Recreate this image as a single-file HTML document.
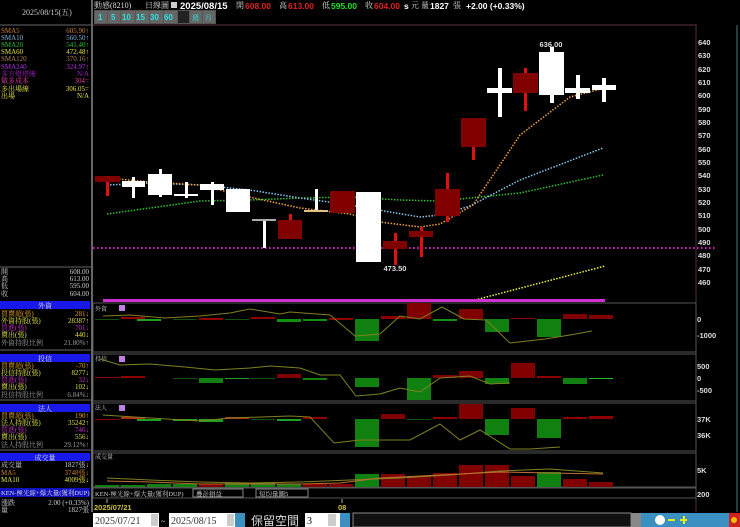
<!DOCTYPE html>
<html><head><meta charset="utf-8"><style>
html,body{margin:0;padding:0;background:#000;width:740px;height:527px;overflow:hidden}
svg{display:block;font-family:"Liberation Serif","Noto Serif CJK SC","Noto Sans CJK TC",serif}
.b{font-family:"Liberation Sans","Noto Sans CJK TC",sans-serif;font-weight:bold}
.s{font-family:"Noto Sans CJK TC","WenQuanYi Zen Hei",sans-serif}
</style></head><body>
<svg width="740" height="527" viewBox="0 0 740 527" xmlns="http://www.w3.org/2000/svg" font-size="7">
<rect width="740" height="527" fill="#000"/>
<line x1="92" y1="0" x2="92" y2="512" stroke="#888" stroke-width="1.5"/>
<line x1="0" y1="25" x2="92" y2="25" stroke="#666"/>
<text x="22" y="15" fill="#ccc" font-size="8">2025/08/15(五)</text>
<g font-size="7">
<text x="1" y="33" fill="#d08030">SMA5</text><text x="89" y="33" fill="#d08030" text-anchor="end">605.90↑</text>
<text x="1" y="40" fill="#80b8e0">SMA10</text><text x="89" y="40" fill="#80b8e0" text-anchor="end">560.50↑</text>
<text x="1" y="47" fill="#30c030">SMA20</text><text x="89" y="47" fill="#30c030" text-anchor="end">541.40↑</text>
<text x="1" y="54" fill="#e0e040">SMA60</text><text x="89" y="54" fill="#e0e040" text-anchor="end">472.48↑</text>
<text x="1" y="61" fill="#b08050">SMA120</text><text x="89" y="61" fill="#b08050" text-anchor="end">370.16↑</text>
<text x="1" y="69" fill="#b030e0">SMA240</text><text x="89" y="69" fill="#b030e0" text-anchor="end">324.97↑</text>
<text x="1" y="76" fill="#a020c0">多方燈塔線</text><text x="89" y="76" fill="#a020c0" text-anchor="end">N/A</text>
<text x="1" y="83" fill="#e040a0">做多成本</text><text x="89" y="83" fill="#e040a0" text-anchor="end">304=</text>
<text x="1" y="91" fill="#e0e040">多出場線</text><text x="89" y="91" fill="#e0e040" text-anchor="end">306.05=</text>
<text x="1" y="98" fill="#e0e040">出場</text><text x="89" y="98" fill="#e0e040" text-anchor="end">N/A</text>
</g>
<line x1="0" y1="267" x2="92" y2="267" stroke="#666"/>
<g font-size="7" fill="#ccc">
<text x="1" y="274">開</text><text x="89" y="274" text-anchor="end">608.00</text>
<text x="1" y="281">高</text><text x="89" y="281" text-anchor="end">613.00</text>
<text x="1" y="288">低</text><text x="89" y="288" text-anchor="end">595.00</text>
<text x="1" y="296">收</text><text x="89" y="296" text-anchor="end">604.00</text>
</g>
<g>
<rect x="0" y="301" width="90" height="8" fill="#1818e8"/><text x="45" y="308" fill="#ddd" text-anchor="middle">外資</text>
<rect x="0" y="354" width="90" height="8" fill="#1818e8"/><text x="45" y="361" fill="#ddd" text-anchor="middle">投信</text>
<rect x="0" y="404" width="90" height="8" fill="#1818e8"/><text x="45" y="411" fill="#ddd" text-anchor="middle">法人</text>
<rect x="0" y="453" width="90" height="8" fill="#1818e8"/><text x="45" y="460" fill="#ddd" text-anchor="middle">成交量</text>
<rect x="0" y="488" width="90" height="9" fill="#1010c0"/><text x="1" y="495" fill="#ddd" font-size="6.5">KEN-極光線+爆大量(獲利DUP)</text>
</g>
<line x1="0" y1="350" x2="92" y2="350" stroke="#666"/><line x1="0" y1="400" x2="92" y2="400" stroke="#666"/><line x1="0" y1="450" x2="92" y2="450" stroke="#666"/>
<g font-size="7">
<text x="1" y="316" fill="#e0a020">買賣超(張)</text><text x="89" y="316" fill="#e0a020" text-anchor="end">281↓</text>
<text x="1" y="323" fill="#e0e040">外資持股(張)</text><text x="89" y="323" fill="#e0e040" text-anchor="end">28387↑</text>
<text x="1" y="330" fill="#c030c0">買進(張)</text><text x="89" y="330" fill="#c030c0" text-anchor="end">701↓</text>
<text x="1" y="337" fill="#e0e040">賣出(張)</text><text x="89" y="337" fill="#e0e040" text-anchor="end">440↓</text>
<text x="1" y="345" fill="#999">外資持股比例</text><text x="89" y="345" fill="#999" text-anchor="end">21.80%↑</text>
<text x="1" y="368" fill="#e0a020">買賣超(張)</text><text x="89" y="368" fill="#e0a020" text-anchor="end">-70↑</text>
<text x="1" y="375" fill="#e0e040">投信持股(張)</text><text x="89" y="375" fill="#e0e040" text-anchor="end">8277↓</text>
<text x="1" y="382" fill="#c030c0">買進(張)</text><text x="89" y="382" fill="#c030c0" text-anchor="end">32↓</text>
<text x="1" y="389" fill="#e0e040">賣出(張)</text><text x="89" y="389" fill="#e0e040" text-anchor="end">102↓</text>
<text x="1" y="397" fill="#999">投信持股比例</text><text x="89" y="397" fill="#999" text-anchor="end">6.84%↓</text>
<text x="1" y="418" fill="#e0a020">買賣超(張)</text><text x="89" y="418" fill="#e0a020" text-anchor="end">190↑</text>
<text x="1" y="425" fill="#e0e040">法人持股(張)</text><text x="89" y="425" fill="#e0e040" text-anchor="end">35242↑</text>
<text x="1" y="432" fill="#c030c0">買進(張)</text><text x="89" y="432" fill="#c030c0" text-anchor="end">746↓</text>
<text x="1" y="439" fill="#e0e040">賣出(張)</text><text x="89" y="439" fill="#e0e040" text-anchor="end">556↓</text>
<text x="1" y="447" fill="#999">法人持股比例</text><text x="89" y="447" fill="#999" text-anchor="end">29.12%↑</text>
<text x="1" y="467" fill="#ccc">成交量</text><text x="89" y="467" fill="#ccc" text-anchor="end">1827張↓</text>
<text x="1" y="475" fill="#d08030">MA5</text><text x="89" y="475" fill="#d08030" text-anchor="end">3748張↓</text>
<text x="1" y="482" fill="#e0e040">MA10</text><text x="89" y="482" fill="#e0e040" text-anchor="end">4009張↓</text>
<text x="1" y="505" fill="#ccc">漲跌</text><text x="89" y="505" fill="#ccc" text-anchor="end">2.00 (+0.33%)</text>
<text x="1" y="512" fill="#ccc">量</text><text x="89" y="512" fill="#ccc" text-anchor="end">1827張</text>
</g>

<g font-size="8">
<text x="94" y="8" fill="#ddd">動感(8210)</text>
<text x="145" y="8" fill="#ddd">日線圖</text>
<rect x="171" y="2" width="6" height="6" fill="#ccc"/>
<text x="180" y="9" fill="#fff" class="b" font-size="9.5">2025/08/15</text>
<text x="236" y="8" fill="#ddd">開</text><text x="245" y="9" class="b" fill="#e02020" font-size="8.5">608.00</text>
<text x="279" y="8" fill="#ddd">高</text><text x="288" y="9" class="b" fill="#e02020" font-size="8.5">613.00</text>
<text x="322" y="8" fill="#ddd">低</text><text x="331" y="9" class="b" fill="#20e020" font-size="8.5">595.00</text>
<text x="365" y="8" fill="#ddd">收</text><text x="374" y="9" class="b" fill="#e02020" font-size="8.5">604.00</text>
<text x="404" y="9" class="b" fill="#fff" font-size="8.5">s</text><text x="411" y="8" fill="#ddd">元</text>
<text x="421" y="8" fill="#ddd">量</text><text x="430" y="9" class="b" fill="#fff" font-size="8.5">1827</text><text x="453" y="8" fill="#ddd">張</text>
<text x="466" y="9" class="b" fill="#fff" font-size="8.5">+2.00 (+0.33%)</text>
</g>
<rect x="94" y="10" width="122" height="14" fill="#555"/>
<g>
<rect x="95" y="11" width="12" height="12" fill="#666"/><text x="98" y="20" class="b" font-size="8" fill="#30e0e0">1</text>
<rect x="108" y="11" width="12" height="12" fill="#666"/><text x="111" y="20" class="b" font-size="8" fill="#30e0e0">5</text>
<rect x="121" y="11" width="14" height="12" fill="#666"/><text x="122" y="20" class="b" font-size="8" fill="#30e0e0">10</text>
<rect x="136" y="11" width="13" height="12" fill="#666"/><text x="136" y="20" class="b" font-size="8" fill="#30e0e0">15</text>
<rect x="150" y="11" width="13" height="12" fill="#666"/><text x="150" y="20" class="b" font-size="8" fill="#30e0e0">30</text>
<rect x="164" y="11" width="13" height="12" fill="#666"/><text x="164" y="20" class="b" font-size="8" fill="#30e0e0">60</text>
<rect x="178" y="11" width="11" height="12" fill="#222"/>
<rect x="190" y="11" width="12" height="12" fill="#666"/><text x="192" y="20" font-size="7" fill="#30e0e0">週</text>
<rect x="203" y="11" width="12" height="12" fill="#666"/><text x="205" y="20" font-size="7" fill="#30e0e0">月</text>
</g>

<line x1="93" y1="25" x2="697" y2="25" stroke="#603040"/>
<line x1="696" y1="25" x2="696" y2="512" stroke="#503040"/>
<line x1="737" y1="25" x2="737" y2="512" stroke="#204040" stroke-width="2"/>
<g fill="#ddd" class="b" font-size="7.5">
<text x="698" y="45">640</text><text x="698" y="58">630</text><text x="698" y="72">620</text><text x="698" y="85">610</text><text x="698" y="98">600</text><text x="698" y="112">590</text><text x="698" y="125">580</text><text x="698" y="138">570</text><text x="698" y="152">560</text><text x="698" y="165">550</text><text x="698" y="178">540</text><text x="698" y="192">530</text><text x="698" y="205">520</text><text x="698" y="218">510</text><text x="698" y="232">500</text><text x="698" y="245">490</text><text x="698" y="258">480</text><text x="698" y="272">470</text><text x="698" y="285">460</text>
</g>
<line x1="93" y1="248" x2="715" y2="248" stroke="#e020c0" stroke-width="2" stroke-dasharray="1.5,2.5"/>
<g fill="none" stroke-width="1.5" stroke-dasharray="1.5,1.5">
<polyline stroke="#30c030" points="107,214 150,208 200,201 250,200 300,198 350,197 400,200 440,201 520,193 603,175"/>
<polyline stroke="#80c8f0" points="107,185 150,183 200,185 250,190 300,198 350,205 390,212 420,217 440,215 470,206 520,180 603,148"/>
<polyline stroke="#f0a040" points="107,178 150,182 200,185 240,195 300,208 350,214 380,222 420,227 440,224 473,205 520,135 570,97 605,88"/>
<polyline stroke="#f0f040" points="475,300 605,266"/>
</g>
<g fill="#800000" stroke="none">
<rect x="106" y="176" width="3" height="20" fill="#e01010"/><rect x="95" y="176" width="25" height="6"/>
<rect x="289" y="214" width="3" height="8" fill="#e01010"/><rect x="278" y="220" width="24" height="19"/>
<rect x="330" y="191" width="25" height="22"/>
<rect x="394" y="233" width="3" height="32" fill="#e01010"/><rect x="383" y="241" width="24" height="8"/>
<rect x="420" y="227" width="3" height="30" fill="#e01010"/><rect x="409" y="231" width="24" height="6"/>
<rect x="446" y="173" width="3" height="49" fill="#e01010"/><rect x="435" y="189" width="25" height="27"/>
<rect x="472" y="147" width="3" height="13" fill="#e01010"/><rect x="461" y="118" width="25" height="29"/>
<rect x="524" y="68" width="3" height="43" fill="#e01010"/><rect x="513" y="73" width="25" height="20"/>
</g>
<g fill="#fff">
<rect x="132" y="177" width="3" height="21"/><rect x="122" y="181" width="23" height="6"/>
<rect x="159" y="169" width="3" height="28"/><rect x="148" y="174" width="24" height="21"/>
<rect x="185" y="182" width="3" height="16"/><rect x="174" y="194" width="24" height="2"/>
<rect x="211" y="182" width="3" height="23"/><rect x="200" y="184" width="24" height="6"/>
<rect x="226" y="189" width="24" height="23"/>
<rect x="263" y="219" width="3" height="29"/><rect x="252" y="219" width="24" height="2" fill="#aaa"/>
<rect x="315" y="189" width="3" height="22"/><rect x="304" y="210" width="24" height="2" fill="#e0c080"/>
<rect x="356" y="192" width="25" height="70"/>
<rect x="498" y="68" width="4" height="49"/><rect x="487" y="88" width="25" height="5"/>
<rect x="550" y="47" width="4" height="56"/><rect x="539" y="52" width="25" height="43"/>
<rect x="576" y="75" width="4" height="24"/><rect x="565" y="88" width="25" height="5"/>
<rect x="602" y="78" width="4" height="24"/><rect x="592" y="85" width="24" height="5"/>
</g>
<text x="551" y="47" fill="#ddd" class="b" font-size="7.5" text-anchor="middle">636.00</text>
<text x="395" y="271" fill="#ddd" class="b" font-size="7.5" text-anchor="middle">473.50</text>
<rect x="103" y="299" width="502" height="3" fill="#d030d0"/>

<g fill="none" stroke="#555">
<rect x="93" y="303" width="603" height="49"/>
<rect x="93" y="354" width="603" height="47"/>
<rect x="93" y="403" width="603" height="48"/>
<rect x="93" y="453" width="603" height="34"/>
<rect x="93" y="488" width="603" height="10"/>
</g>
<g font-size="6" fill="#ccc"><text x="95" y="311">外資</text><text x="95" y="361">投信</text><text x="95" y="410">法人</text><text x="95" y="459">成交量</text></g>
<rect x="119" y="305" width="6" height="6" fill="#c080e0"/><rect x="119" y="356" width="6" height="6" fill="#c080e0"/><rect x="119" y="405" width="6" height="6" fill="#c080e0"/>
<g fill="#ddd" class="b" font-size="7.5">
<text x="697" y="322">0</text><text x="697" y="338">-1000</text>
<text x="697" y="369">500</text><text x="697" y="381">0</text><text x="697" y="393">-500</text>
<text x="697" y="422">37K</text><text x="697" y="438">36K</text>
<text x="697" y="473">5K</text><text x="697" y="497">200</text>
</g>
<g>
<rect x="95" y="319" width="24" height="1" fill="#105010"/>
<rect x="121" y="317" width="24" height="2" fill="#900000"/>
<rect x="137" y="319" width="24" height="2" fill="#20a020"/>
<rect x="173" y="319" width="24" height="1" fill="#105010"/>
<rect x="199" y="318" width="24" height="2" fill="#900000"/>
<rect x="225" y="319" width="24" height="1" fill="#105010"/>
<rect x="251" y="317" width="24" height="2" fill="#900000"/>
<rect x="277" y="319" width="24" height="3" fill="#109010"/>
<rect x="303" y="319" width="24" height="2" fill="#109010"/>
<rect x="329" y="318" width="24" height="2" fill="#900000"/>
<rect x="355" y="319" width="24" height="22" fill="#108010"/>
<rect x="381" y="316" width="24" height="3" fill="#900000"/>
<rect x="407" y="303" width="24" height="16" fill="#800000"/>
<rect x="433" y="319" width="24" height="2" fill="#109010"/>
<rect x="459" y="309" width="24" height="10" fill="#800000"/>
<rect x="485" y="319" width="24" height="13" fill="#108010"/>
<rect x="511" y="318" width="24" height="1" fill="#900000"/>
<rect x="537" y="319" width="24" height="18" fill="#108010"/>
<rect x="563" y="314" width="24" height="5" fill="#800000"/>
<rect x="589" y="315" width="24" height="4" fill="#800000"/>
<polyline fill="none" stroke="#808020" points="103,316 130,315 165,318 200,316 230,313 250,309 280,314 290,312 330,315 355,336 380,334 400,316 420,319 442,307 464,319 486,320 510,343 545,339 570,335 592,331"/>
</g>
<g>
<rect x="95" y="377" width="24" height="1" fill="#900000"/>
<rect x="121" y="376" width="24" height="2" fill="#900000"/>
<rect x="173" y="378" width="24" height="1" fill="#105010"/>
<rect x="199" y="378" width="24" height="5" fill="#108010"/>
<rect x="225" y="378" width="24" height="1" fill="#20a020"/>
<rect x="251" y="378" width="24" height="1" fill="#105010"/>
<rect x="277" y="374" width="24" height="4" fill="#800000"/>
<rect x="303" y="378" width="24" height="2" fill="#108010"/>
<rect x="355" y="378" width="24" height="9" fill="#108010"/>
<rect x="407" y="378" width="24" height="22" fill="#108010"/>
<rect x="433" y="375" width="24" height="3" fill="#800000"/>
<rect x="459" y="371" width="24" height="7" fill="#800000"/>
<rect x="485" y="378" width="24" height="6" fill="#108010"/>
<rect x="511" y="363" width="24" height="15" fill="#800000"/>
<rect x="537" y="376" width="24" height="2" fill="#900000"/>
<rect x="563" y="378" width="24" height="6" fill="#108010"/>
<rect x="589" y="378" width="24" height="1" fill="#20c020"/>
<polyline fill="none" stroke="#808020" points="100,359 120,365 150,364 185,367 215,370 250,368 270,366 300,368 320,375 340,375 356,396 380,394 400,388 420,392 440,378 470,376 490,384 510,383"/>
</g>
<g>
<rect x="95" y="419" width="24" height="1" fill="#900000"/>
<rect x="121" y="417" width="24" height="2" fill="#b03010"/>
<rect x="137" y="419" width="24" height="2" fill="#20a020"/>
<rect x="173" y="419" width="24" height="2" fill="#20a020"/>
<rect x="199" y="419" width="24" height="3" fill="#20a020"/>
<rect x="225" y="417" width="24" height="2" fill="#b03010"/>
<rect x="251" y="419" width="24" height="1" fill="#105010"/>
<rect x="277" y="419" width="24" height="2" fill="#20a020"/>
<rect x="303" y="417" width="24" height="2" fill="#900000"/>
<rect x="355" y="419" width="24" height="28" fill="#108010"/>
<rect x="381" y="414" width="24" height="5" fill="#800000"/>
<rect x="407" y="419" width="24" height="1" fill="#105010"/>
<rect x="433" y="417" width="24" height="2" fill="#900000"/>
<rect x="459" y="404" width="24" height="15" fill="#800000"/>
<rect x="485" y="419" width="24" height="16" fill="#108010"/>
<rect x="511" y="408" width="24" height="11" fill="#800000"/>
<rect x="537" y="419" width="24" height="19" fill="#108010"/>
<rect x="563" y="417" width="24" height="2" fill="#900000"/>
<rect x="589" y="416" width="24" height="3" fill="#900000"/>
<polyline fill="none" stroke="#808020" points="103,415 150,418 200,421 230,418 290,416 310,417 334,443 360,440 380,440 410,440 440,424 460,440 480,430 510,449 530,449 560,447"/>
</g>
<g>
<rect x="95" y="485" width="24" height="2" fill="#108010"/>
<rect x="121" y="485" width="24" height="2" fill="#108010"/>
<rect x="147" y="484" width="24" height="3" fill="#108010"/>
<rect x="173" y="484" width="24" height="3" fill="#108010"/>
<rect x="199" y="484" width="24" height="3" fill="#800000"/>
<rect x="225" y="483" width="24" height="4" fill="#108010"/>
<rect x="251" y="483" width="24" height="4" fill="#108010"/>
<rect x="277" y="484" width="24" height="3" fill="#108010"/>
<rect x="303" y="484" width="24" height="3" fill="#800000"/>
<rect x="329" y="484" width="24" height="3" fill="#800000"/>
<rect x="355" y="474" width="24" height="13" fill="#108010"/>
<rect x="381" y="474" width="24" height="13" fill="#800000"/>
<rect x="407" y="476" width="24" height="11" fill="#800000"/>
<rect x="433" y="473" width="24" height="14" fill="#800000"/>
<rect x="459" y="465" width="24" height="22" fill="#800000"/>
<rect x="485" y="465" width="24" height="22" fill="#800000"/>
<rect x="511" y="476" width="24" height="11" fill="#800000"/>
<rect x="537" y="472" width="24" height="15" fill="#108010"/>
<rect x="563" y="479" width="24" height="8" fill="#800000"/>
<rect x="589" y="482" width="24" height="5" fill="#800000"/>
<polyline fill="none" stroke="#808020" points="107,478 150,480 200,482 250,483 300,482 350,480 400,478 450,475 500,471 550,469 603,473"/>
<polyline fill="none" stroke="#c07030" points="107,481 150,482 200,484 250,484 300,484 340,483 380,478 420,476 460,474 500,472 550,473 603,474"/>
</g>
<g font-size="6.5" fill="#ccc">
<text x="95" y="496">KEN-極光線+爆大量(獲利DUP)</text>
<rect x="193" y="489" width="50" height="8" fill="#000" stroke="#888"/><text x="196" y="496">疊計損益</text>
<rect x="256" y="489" width="52" height="8" fill="#000" stroke="#888"/><text x="259" y="496">短均量圖5</text>
</g>
<line x1="107" y1="499" x2="107" y2="503" stroke="#aa9"/><line x1="342" y1="499" x2="342" y2="503" stroke="#aa9"/>
<text x="94" y="510" fill="#d0c040" class="b" font-size="7.5">2025/07/21</text>
<text x="338" y="510" fill="#d0c040" class="b" font-size="7.5">08</text>
<rect x="93" y="513" width="66" height="14" fill="#fff"/><text x="95" y="524" fill="#333" font-size="10">2025/07/21</text>
<rect x="151" y="514" width="7" height="12" fill="#ccc"/>
<text x="161" y="524" fill="#ddd" font-size="8">~</text>
<rect x="169" y="513" width="66" height="14" fill="#fff"/><text x="171" y="524" fill="#333" font-size="10">2025/08/15</text>
<rect x="227" y="514" width="7" height="12" fill="#ccc"/>
<rect x="235" y="513" width="10" height="14" fill="#3a90c0"/>
<text x="251" y="525" fill="#ddd" font-size="12" class="s">保留空間</text>
<rect x="305" y="513" width="35" height="14" fill="#fff"/><text x="307" y="524" fill="#000" font-size="10">3</text>
<rect x="328" y="514" width="8" height="12" fill="#ccc"/>
<rect x="340" y="513" width="10" height="14" fill="#3a90c0"/>
<rect x="353" y="513" width="278" height="14" fill="#111" stroke="#888"/>
<rect x="631" y="513" width="10" height="14" fill="#888"/>
<rect x="641" y="513" width="92" height="14" fill="#3a90c0"/>
<rect x="729" y="513" width="11" height="14" fill="#d02020"/>
<circle cx="660" cy="520" r="5" fill="#fff"/><rect x="668" y="519" width="7" height="2" fill="#ee0"/><rect x="680" y="519" width="7" height="2" fill="#ee0"/><rect x="683" y="516" width="2" height="8" fill="#ee0"/>
<circle cx="734" cy="520" r="3" fill="#f0c000"/>
</svg>
</body></html>
